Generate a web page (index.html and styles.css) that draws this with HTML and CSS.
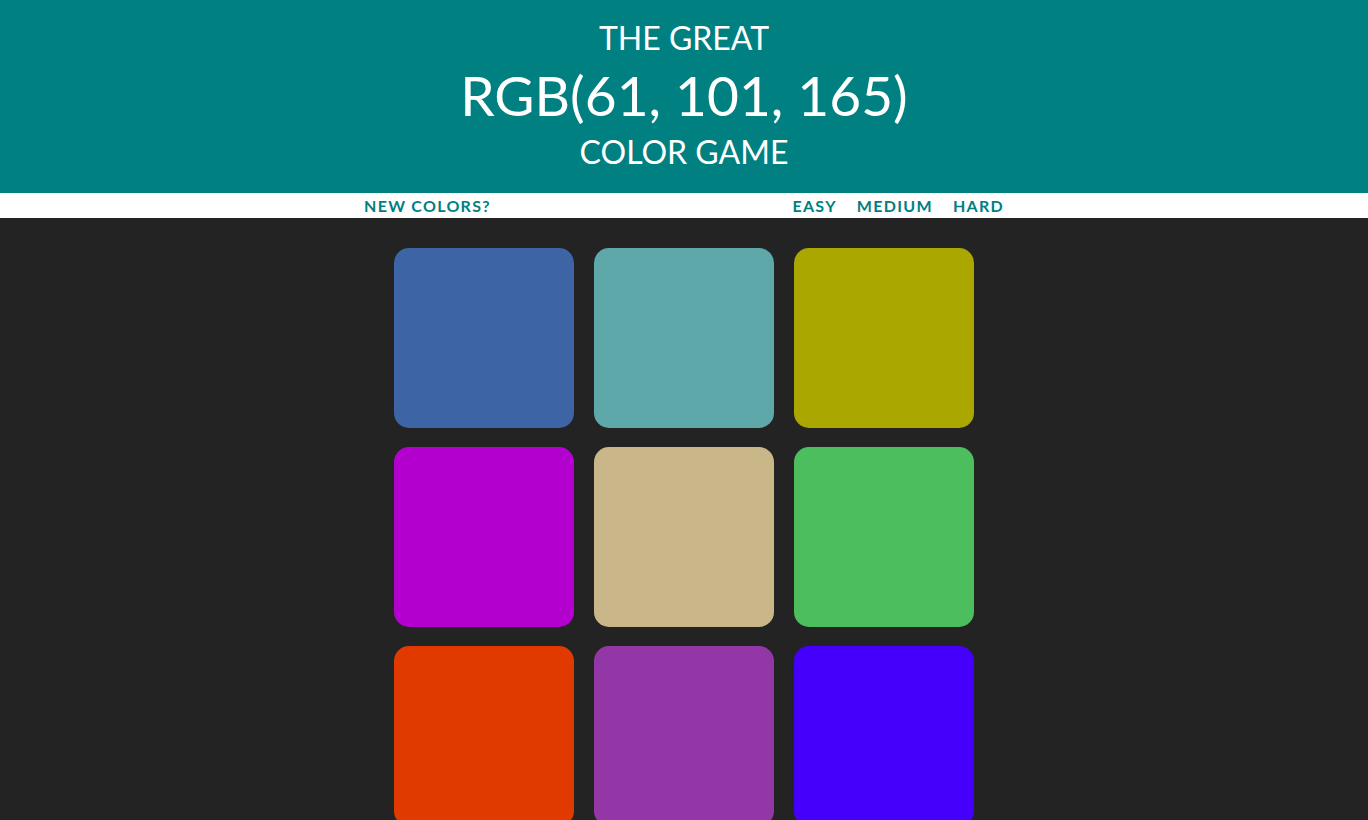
FILE: index.html
```html
<!doctype html>
<html>
  <head>
    <title>Color Game</title>
    <link rel="stylesheet" href="styles.css">
  </head>
  <body>
    <h1>
      <span class="ligne_petite">The Great</span>
      <span id="couleur_cible">RGB(61, 101, 165)</span>
      <span class="ligne_petite">Color Game</span>
    </h1>

    <div id="bandeau">
      <button id="reinitialiser">New Colors?</button>
      <span id="message"></span>
      <div class="niveaux">
        <button class="mode">Easy</button>
        <button class="mode">Medium</button>
        <button class="mode">Hard</button>
      </div>
    </div>

    <div id="conteneur">
      <div class="carre" style="background-color: rgb(61, 101, 165);"></div>
      <div class="carre" style="background-color: rgb(94, 168, 170);"></div>
      <div class="carre" style="background-color: rgb(170, 168, 0);"></div>
      <div class="carre" style="background-color: rgb(179, 0, 207);"></div>
      <div class="carre" style="background-color: rgb(201, 183, 137);"></div>
      <div class="carre" style="background-color: rgb(76, 190, 94);"></div>
      <div class="carre" style="background-color: rgb(224, 58, 0);"></div>
      <div class="carre" style="background-color: rgb(148, 55, 166);"></div>
      <div class="carre" style="background-color: rgb(68, 0, 250);"></div>
    </div>
  </body>
</html>
```

FILE: styles.css
```css
body {
  background-color: #232323;
  margin: 0;
  font-family: Lato, "Open Sans", sans-serif;
}

h1 {
  margin: 0;
  padding: 17px 0 20px 0;
  background-color: #008080;
  color: white;
  text-align: center;
  text-transform: uppercase;
  font-weight: normal;
}

.ligne_petite {
  display: block;
  font-size: 32px;
  line-height: 42px;
}

#couleur_cible {
  display: block;
  font-size: 55px;
  line-height: 72px;
}

#bandeau {
  background-color: white;
  height: 25px;
  display: flex;
  justify-content: space-between;
  align-items: center;
  width: 640px;
  margin: 0 auto;
  box-shadow: 0 0 0 100vw white;
  clip-path: inset(0 -100vw);
}

button {
  border: none;
  background: none;
  padding: 0;
  color: #008080;
  font-family: inherit;
  font-size: 16px;
  font-weight: bold;
  letter-spacing: 1.3px;
  text-transform: uppercase;
  cursor: pointer;
}

.niveaux {
  display: flex;
  gap: 20px;
}

#conteneur {
  width: 600px;
  margin: 20.5px auto 0 auto;
  display: flex;
  flex-wrap: wrap;
}

.carre {
  width: 180px;
  height: 180px;
  margin: 9.5px 10px;
  border-radius: 15px;
}
```
